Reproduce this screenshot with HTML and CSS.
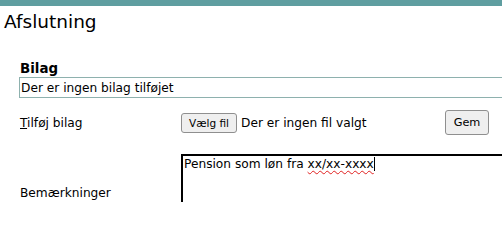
FILE: index.html
```html
<!DOCTYPE html>
<html lang="da">
<head>
<meta charset="utf-8">
<title>Afslutning</title>
<link rel="stylesheet" href="styles.css">
</head>
<body>
<div class="page">
<div class="topbar"></div>
<h1 class="title">Afslutning</h1>
<section class="attachments">
  <h2 class="section-title">Bilag</h2>
  <div class="attach-list">Der er ingen bilag tilføjet</div>
  <div class="upload-row">
    <label class="field-label"><span class="accesskey">T</span>ilføj bilag</label>
    <div class="file-control">
      <button class="btn file-btn" type="button">Vælg fil</button>
      <span class="file-status">Der er ingen fil valgt</span>
    </div>
    <button class="btn save-btn" type="button">Gem</button>
  </div>
  <div class="remarks-row">
    <label class="field-label">Bemærkninger</label>
    <div class="remarks">Pension som løn fra <span class="misspelled">xx/xx-xxxx</span><span class="caret"></span></div>
  </div>
</section>
</div>
</body>
</html>
```
FILE: styles.css
```css
html, body {
  margin: 0;
  padding: 0;
  overflow: hidden;
  background: #fff;
  height: 202px;
}
body {
  font-family: "DejaVu Sans", Verdana, sans-serif;
  font-size: 12.2px;
  line-height: 14px;
  color: #000;
}
.page {
  height: 202px;
  width: 502px;
  overflow: hidden;
}
.topbar {
  height: 6px;
  background: #5f9ea0;
}
.title {
  margin: 5px 0 0 4px;
  font-size: 18.5px;
  line-height: 22px;
  font-weight: normal;
}
.attachments {
  margin: 28px 0 0 19px;
  width: 560px;
}
.section-title {
  margin: 0;
  padding-left: 1px;
  font-size: 13.4px;
  line-height: 16px;
  font-weight: bold;
}
.attach-list {
  border: 1px solid #8eb1ae;
  padding: 3px 2px 1px 1px;
  line-height: 15px;
}
.upload-row {
  margin-top: 12px;
  display: grid;
  grid-template-columns: 162px 264px 44px;
  align-items: center;
  height: 25px;
}
.field-label {
  padding-left: 1px;
}
.accesskey {
  text-decoration: underline;
}
.file-control {
  display: flex;
  align-items: center;
}
.btn {
  font-family: "DejaVu Sans", Verdana, sans-serif;
  background: #efefef;
  border: 1px solid #8f8f8f;
  border-radius: 3px;
  color: #000;
  box-sizing: border-box;
  padding: 0;
  margin: 0;
}
.file-btn {
  width: 56px;
  height: 20px;
  font-size: 10.5px;
  line-height: 12px;
}
.file-status {
  margin-left: 4px;
}
.save-btn {
  width: 44px;
  height: 25px;
  font-size: 11.3px;
  line-height: 13px;
}
.remarks-row {
  margin-top: 19px;
  display: grid;
  grid-template-columns: 162px 1fr;
  align-items: center;
}
.remarks {
  height: 77px;
  box-sizing: border-box;
  border: 2px solid #000;
  padding: 1px 1px;
  line-height: 14px;
}
.misspelled {
  text-decoration: underline wavy #e02020;
  text-decoration-thickness: 1px;
  text-underline-offset: 2px;
  text-decoration-skip-ink: none;
}
.caret {
  display: inline-block;
  width: 1px;
  height: 14px;
  background: #000;
  vertical-align: -3px;
}
```
